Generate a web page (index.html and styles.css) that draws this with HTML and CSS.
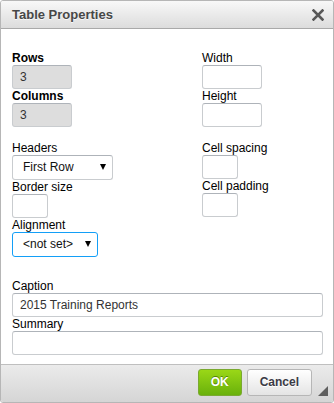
FILE: index.html
```html
<!DOCTYPE html>
<html lang="en">
<head>
<meta charset="UTF-8" />
<meta name="viewport" content="width=device-width, initial-scale=1" />
<title>Table Properties</title>
<link rel="stylesheet" href="styles.css">
</head>
<body>
  <div class="dialog">
    <div class="dialog-title">
      Table Properties
      <a class="close" title="Close">
        <svg width="12" height="12" viewBox="0 0 12 12">
          <path d="M1.5 1.5 L10.5 10.5 M10.5 1.5 L1.5 10.5" stroke="#585858" stroke-width="2.6" stroke-linecap="square" />
        </svg>
      </a>
    </div>

    <div class="dialog-body">
      <div class="props">
        <div class="col">
          <label class="strong">Rows</label>
          <input type="text" class="txt mid" value="3" disabled />
          <label class="strong">Columns</label>
          <input type="text" class="txt mid" value="3" disabled />
          <div class="spacer"></div>
          <label>Headers</label>
          <div class="select headers">First Row</div>
          <label>Border size</label>
          <input type="text" class="txt small" />
          <label>Alignment</label>
          <div class="select align focused">&lt;not set&gt;</div>
        </div>
        <div class="col">
          <label>Width</label>
          <input type="text" class="txt mid" />
          <label>Height</label>
          <input type="text" class="txt mid" />
          <div class="spacer"></div>
          <label>Cell spacing</label>
          <input type="text" class="txt small" />
          <label>Cell padding</label>
          <input type="text" class="txt small" />
        </div>
      </div>

      <div class="caption">
        <label>Caption</label>
        <input type="text" class="txt full" value="2015 Training Reports" />
        <label>Summary</label>
        <input type="text" class="txt full" />
      </div>
    </div>

    <div class="dialog-footer">
      <a class="btn ok">OK</a>
      <a class="btn cancel">Cancel</a>
      <span class="grip"></span>
    </div>
  </div>
</body>
</html>
```

FILE: styles.css
```css
body {
  margin: 0;
  font-family: 'Liberation Sans', Arial, sans-serif;
  font-size: 12px;
  color: #000;
  background: #fff;
}
.dialog {
  width: 334px;
  height: 403px;
  box-sizing: border-box;
  border: 1px solid #b6b6b6;
  border-radius: 3px;
  display: flex;
  flex-direction: column;
  overflow: hidden;
}
.dialog-title {
  position: relative;
  height: 27px;
  line-height: 27px;
  padding-left: 11px;
  font-size: 13px;
  font-weight: 700;
  color: #474747;
  text-shadow: 0 1px 0 rgba(255, 255, 255, 0.75);
  background: linear-gradient(#f8f8f8, #dcdcdc);
  border-bottom: 1px solid #a9a9a9;
}
.dialog-title .close {
  position: absolute;
  top: 8px;
  right: 9px;
  width: 12px;
  height: 12px;
}
.dialog-title .close svg {
  display: block;
}

.dialog-body {
  flex: 1;
  padding: 22px 11px 0 11px;
  background: #fff;
}
.props {
  display: grid;
  grid-template-columns: 190px 1fr;
}
.col {
  display: flex;
  flex-direction: column;
  align-items: flex-start;
}
label {
  display: block;
  height: 14px;
  line-height: 14px;
  color: #000;
}
label.strong {
  font-weight: 700;
}
.spacer {
  height: 14px;
}
.txt {
  display: block;
  box-sizing: border-box;
  height: 24px;
  margin: 0;
  padding: 0 7px;
  font-family: inherit;
  font-size: 12px;
  color: #333;
  background: #fff;
  border: 1px solid #c9cccf;
  border-top-color: #aeb3b9;
  border-radius: 3px;
  outline: none;
}
.txt:disabled {
  background: #ddd;
  color: #333;
}
.txt.mid {
  width: 60px;
}
.txt.small {
  width: 36px;
}
.txt.full {
  width: 311px;
}

.select {
  position: relative;
  box-sizing: border-box;
  height: 25px;
  line-height: 23px;
  padding-left: 10px;
  color: #111;
  background: #fff;
  border: 1px solid #c9cccf;
  border-top-color: #aeb3b9;
  border-radius: 3px;
}
.select::after {
  content: "";
  position: absolute;
  top: 8px;
  right: 6px;
  border-left: 3px solid transparent;
  border-right: 3px solid transparent;
  border-top: 6px solid #000;
}
.select.headers {
  width: 101px;
}
.select.align {
  width: 86px;
}
.select.focused {
  border-color: #139ff7;
}

.caption {
  margin-top: 22px;
}

.dialog-footer {
  position: relative;
  height: 38px;
  padding: 4px 21px 0 0;
  box-sizing: border-box;
  display: flex;
  justify-content: flex-end;
  align-items: flex-start;
  gap: 5px;
  background: linear-gradient(#ebebeb, #d5d5d5);
  border-top: 1px solid #bfbfbf;
}
.btn {
  box-sizing: border-box;
  height: 27px;
  line-height: 25px;
  padding: 0 12px;
  font-size: 12px;
  font-weight: 700;
  border-radius: 3px;
  cursor: pointer;
}
.btn.ok {
  color: #fff;
  text-shadow: 0 -1px 0 #55830c;
  background: linear-gradient(#9ad717, #69b10b);
  border: 1px solid #7aa930;
}
.btn.cancel {
  color: #3b3b45;
  text-shadow: 0 1px 0 #fff;
  background: linear-gradient(#fff, #e4e4e4);
  border: 1px solid #b6b6b6;
}
.grip {
  position: absolute;
  right: 5px;
  bottom: 6px;
  width: 0;
  height: 0;
  border-left: 10px solid transparent;
  border-bottom: 10px solid #5f5f5f;
}
```
